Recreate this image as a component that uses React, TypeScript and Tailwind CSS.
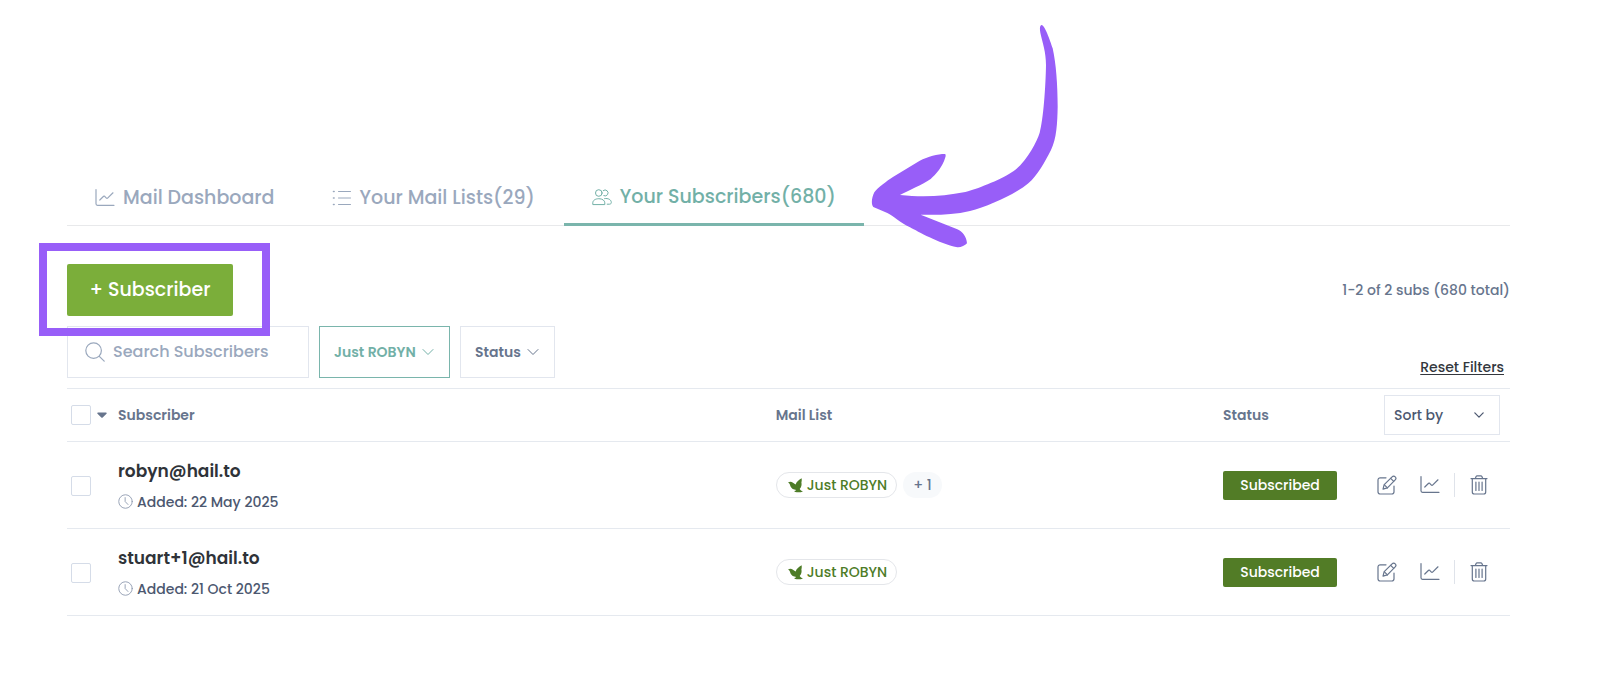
import type { ReactNode } from "react";

type IconProps = { className?: string };

type Subscriber = {
  email: string;
  added: string;
  lists: string[];
  more: number;
  status: string;
};

const subscribers: Subscriber[] = [
  { email: "robyn@hail.to", added: "22 May 2025", lists: ["Just ROBYN"], more: 1, status: "Subscribed" },
  { email: "stuart+1@hail.to", added: "21 Oct 2025", lists: ["Just ROBYN"], more: 0, status: "Subscribed" },
];

const Icon = ({ className = "size-5", children }: IconProps & { children: ReactNode }) => (
  <svg
    viewBox="0 0 20 20"
    fill="none"
    stroke="currentColor"
    strokeWidth="1.2"
    strokeLinecap="round"
    strokeLinejoin="round"
    className={`shrink-0 ${className}`}
    aria-hidden="true"
  >
    {children}
  </svg>
);

const ChartIcon = ({ className }: IconProps) => (
  <Icon className={className}>
    <path d="M1 1.500v14.300a1.500 1.500 0 0 0 1.500 1.500H19" />
    <path d="M4.800 12 8.600 8.300a.8.8 0 0 1 1.100 0l1.700 1.800a.8.8 0 0 0 1.200 0L18 4.800" />
  </Icon>
);

const ListIcon = ({ className }: IconProps) => (
  <Icon className={className}>
    <path d="M6.500 3.500H18.500M6.500 10H18.500M6.500 16.500H18.500" strokeWidth="1" />
    <path d="M1.500 3.500h.6M1.500 10h.6M1.500 16.500h.6" strokeWidth="1.600" />
  </Icon>
);

const UsersIcon = ({ className }: IconProps) => (
  <Icon className={className}>
    <g strokeWidth="1">
      <circle cx="6.800" cy="6" r="3.300" />
      <path d="M11.200 3.600a3 3 0 1 1 .6 5.100" />
      <path d="M.8 17.200v-1.400c0-2.300 2.400-4.100 6-4.100s6 1.800 6 4.100v1.400z" />
      <path d="M12.600 11.600c3.800-.7 6.700 1.300 6.700 3.900 0 1-.7 1.700-1.700 1.700h-2.400" />
    </g>
  </Icon>
);

const SearchIcon = ({ className }: IconProps) => (
  <Icon className={className}>
    <circle cx="8.600" cy="8.600" r="7.800" />
    <path d="m14.300 14.300 4.900 4.900" />
  </Icon>
);

const ChevronIcon = ({ className }: IconProps) => (
  <svg
    viewBox="0 0 12 12"
    fill="none"
    stroke="currentColor"
    strokeLinecap="round"
    strokeLinejoin="round"
    className={className}
    aria-hidden="true"
  >
    <path d="m1 3.500 5 5 5-5" />
  </svg>
);

const ClockIcon = ({ className }: IconProps) => (
  <Icon className={className}>
    <circle cx="10" cy="10" r="9" />
    <path d="M9.500 4.800V10l3.800 4" />
  </Icon>
);

const EditIcon = ({ className }: IconProps) => (
  <Icon className={className}>
    <path d="M9 2.800H3.200A2.200 2.200 0 0 0 1 5v11.800A2.200 2.200 0 0 0 3.200 19h11.600a2.200 2.200 0 0 0 2.200-2.200V11" />
    <path d="M6 14.200 7.200 9.700l7.900-7.900a2 2 0 0 1 3.100 3.100l-7.800 8z" />
    <path d="m13.700 3.300 3 3M7.400 9.800l3 3" />
  </Icon>
);

const TrashIcon = ({ className }: IconProps) => (
  <Icon className={className}>
    <path d="M2 3.600h16M6.300 3.400l.8-1.800A1.200 1.200 0 0 1 8.200.9h3.600c.5 0 .9.3 1.100.7l.8 1.800" />
    <path d="M3.300 3.800V17a2 2 0 0 0 2 2h9.400a2 2 0 0 0 2-2V3.800" />
    <path d="M6.900 7v8.500M10 7v8.500M13.100 7v8.500" />
  </Icon>
);

const BirdIcon = ({ className }: IconProps) => (
  <svg viewBox="0 0 14 14" fill="currentColor" className={className} aria-hidden="true">
    <path d="M12.700.2c.3 1.500.1 2.800-.2 4 .5 1.900.1 4.200-1.600 6 .6 1.100 1.700 1.900 3.100 2.400-2.400.9-5 1-7.200.4-.6-.2-.9-.5-1-.9.800-.1 1.400-.4 1.900-.9-2.500-.2-4.500-1.300-5.300-3.200C1.900 6.600 1.700 5.100 0 4.200c1.500-.8 3.100-.8 4.300-.1 1 .6 1.700 1.500 2.800 2 .8-2.700 3-4.400 5.600-5.900z" />
  </svg>
);

const tabs = [
  { label: "Mail Dashboard", icon: ChartIcon, active: false },
  { label: "Your Mail Lists(29)", icon: ListIcon, active: false },
  { label: "Your Subscribers(680)", icon: UsersIcon, active: true },
];

const TabBar = () => (
  <nav className="flex gap-px border-b border-[#e8e9eb]">
    {tabs.map(({ label, icon: TabIcon, active }) => (
      <div key={label} className="relative">
        <a
          href="#"
          aria-current={active ? "page" : undefined}
          className={
            active
              ? "-mb-px flex h-[57px] items-center gap-2 border-b-[3px] border-[#7ab5ac] px-7 pt-[2px] text-[19px] font-medium text-[#72b0a7]"
              : "flex h-14 items-center gap-2 px-7 pt-[2px] text-[19px] font-medium text-[#9aa8bd]"
          }
        >
          <TabIcon />
          {label}
        </a>
        {active && (
          <svg
            viewBox="63 39 564 678"
            fill="#985ef8"
            className="pointer-events-none absolute -bottom-6 left-full ml-[7px] h-[226px] w-[188px]"
            aria-hidden="true"
          >
            <path d="M575 45C584 45 600 90 608 115C618 160 623 225 623 290C622 340 620 385 603 420C585 455 562 497 535 520C500 550 415 590 360 603C310 615 260 615 212 614L322 658C338 665 350 682 351 700C345 707 332 713 322 712C265 700 205 665 180 652C150 637 130 618 112 609L70 591C62 583 66 560 73 547C83 533 110 513 130 500L208 453C235 439 262 432 285 432C288 434 287 438 286 442C278 470 258 494 242 507C220 523 170 544 150 555C220 562 280 559 346 546C390 535 460 505 490 484C530 455 560 396 569 368C580 330 587 230 588 165C588 125 578 100 571 68C568 52 571 45 575 45Z" />
          </svg>
        )}
      </div>
    ))}
  </nav>
);

type PickerProps = {
  label: string;
  options: string[];
  wrapClass: string;
  selectClass: string;
  chevronClass: string;
};

const Picker = ({ label, options, wrapClass, selectClass, chevronClass }: PickerProps) => (
  <div className={`relative ${wrapClass}`}>
    <select aria-label={label} className={`size-full appearance-none border bg-white outline-none ${selectClass}`}>
      {options.map((option) => (
        <option key={option}>{option}</option>
      ))}
    </select>
    <ChevronIcon className={`pointer-events-none absolute top-1/2 -translate-y-1/2 ${chevronClass}`} />
  </div>
);

const Toolbar = () => (
  <>
    <div className="mt-[38px] flex items-center justify-between">
      <div className="relative">
        <button
          type="button"
          className="block h-[52px] w-[166px] cursor-pointer rounded-[2px] bg-[#7bae3a] text-[19px] font-medium text-white"
        >
          + Subscriber
        </button>
        <div className="pointer-events-none absolute -top-[21px] -right-[37px] -bottom-5 -left-7 z-10 border-8 border-[#985ef8]" />
      </div>
      <p className="text-[14px] font-medium text-[#67758d]">1-2 of 2 subs (680 total)</p>
    </div>
    <div className="mt-[10px] flex items-end justify-between pb-[10px]">
      <div className="flex gap-[10px]">
        <label className="flex h-[52px] w-[242px] items-center gap-2 border border-[#e2e6ee] pl-[17px] text-[#9aa8bd]">
          <SearchIcon />
          <input
            type="search"
            aria-label="Search Subscribers"
            placeholder="Search Subscribers"
            className="w-full min-w-0 text-[16px] font-medium outline-none placeholder:text-[#9aa8bd]"
          />
        </label>
        <Picker
          label="Mail list"
          options={["Just ROBYN"]}
          wrapClass="h-[52px] w-[131px] text-[#72b0a7]"
          selectClass="border-[#7ab5ac] pl-[14px] text-[14px] font-semibold"
          chevronClass="right-4 size-3"
        />
        <Picker
          label="Status"
          options={["Status", "Subscribed"]}
          wrapClass="h-[52px] w-[95px] text-[#67758d]"
          selectClass="border-[#e2e6ee] pl-[14px] text-[14px] font-semibold"
          chevronClass="right-4 size-3"
        />
      </div>
      <a href="#" className="mr-[6px] text-[14px] font-medium text-[#33373d] underline underline-offset-2">
        Reset Filters
      </a>
    </div>
  </>
);

const Checkbox = ({ label }: { label: string }) => (
  <input
    type="checkbox"
    aria-label={label}
    className="block size-5 shrink-0 appearance-none rounded-[2px] border border-[#d5dce8] bg-white checked:bg-[#7bae3a]"
  />
);

const SubscriberRow = ({ item }: { item: Subscriber }) => (
  <tr className="h-[87px] border-b border-[#e5e9ef]">
    <td className="pt-[2px] pl-1">
      <Checkbox label={`Select ${item.email}`} />
    </td>
    <td className="pt-[2px]">
      <p className="text-[17px] leading-6 font-semibold text-[#2f3339]">{item.email}</p>
      <p className="mt-[7px] flex items-center gap-1 text-[14px] leading-6 font-medium text-[#4c5870]">
        <ClockIcon className="size-[15px] text-[#8f9bb0]" />
        Added: {item.added}
      </p>
    </td>
    <td>
      <div className="flex gap-[6px] text-[14px] font-medium">
        {item.lists.map((list) => (
          <span
            key={list}
            className="flex h-[26px] items-center gap-1 rounded-full border border-[#e4e6ea] pr-[9px] pl-[11px] text-[#4d7c27]"
          >
            <BirdIcon className="size-[15px]" />
            {list}
          </span>
        ))}
        {item.more > 0 && (
          <span className="flex h-[26px] items-center rounded-full bg-[#f7f9fb] px-[10px] text-[#67758d]">
            + {item.more}
          </span>
        )}
      </div>
    </td>
    <td>
      <span className="flex h-[29px] w-[114px] items-center justify-center rounded-[2px] bg-[#527c26] text-[14px] font-medium text-white">
        {item.status}
      </span>
    </td>
    <td className="text-[#67758d]">
      <div className="flex items-center">
        <button type="button" aria-label="Edit" className="cursor-pointer">
          <EditIcon />
        </button>
        <button type="button" aria-label="Statistics" className="ml-[23px] cursor-pointer">
          <ChartIcon />
        </button>
        <span className="mx-[14px] h-6 w-px bg-[#dfe3ea]" />
        <button type="button" aria-label="Delete" className="cursor-pointer">
          <TrashIcon />
        </button>
      </div>
    </td>
  </tr>
);

const SubscriberTable = () => (
  <table className="w-full table-fixed border-collapse border-t border-[#e5e9ef] text-left">
    <thead>
      <tr className="h-[53px] border-b border-[#e5e9ef] text-[14px] text-[#67758d]">
        <th className="w-[51px] pl-1">
          <div className="flex items-center gap-[6px]">
            <Checkbox label="Select all" />
            <button type="button" aria-label="Selection options" className="cursor-pointer">
              <svg viewBox="0 0 10 6" fill="currentColor" className="h-[6px] w-[10px]" aria-hidden="true">
                <path d="M1 .5h8c.7 0 1 .8.5 1.300L5.700 5.500a1 1 0 0 1-1.400 0L.5 1.800C0 1.300.3.500 1 .500z" />
              </svg>
            </button>
          </div>
        </th>
        <th className="font-semibold">Subscriber</th>
        <th className="w-[31%] font-semibold">Mail List</th>
        <th className="w-[154px] font-semibold">Status</th>
        <th className="w-[133px] font-medium">
          <Picker
            label="Sort by"
            options={["Sort by", "Name", "Date added"]}
            wrapClass="ml-[7px] h-10 w-[116px] text-[#4c5870]"
            selectClass="border-[#e2e6ee] pl-[9px] text-[14px]"
            chevronClass="right-4 size-[10px] stroke-[1.5]"
          />
        </th>
      </tr>
    </thead>
    <tbody>
      {subscribers.map((item) => (
        <SubscriberRow key={item.email} item={item} />
      ))}
    </tbody>
  </table>
);

export default function App() {
  return (
    <main className="min-h-screen bg-white pt-[169px] pr-[94px] pb-16 pl-[67px] font-[Poppins,Inter,sans-serif]">
      <TabBar />
      <Toolbar />
      <SubscriberTable />
    </main>
  );
}
